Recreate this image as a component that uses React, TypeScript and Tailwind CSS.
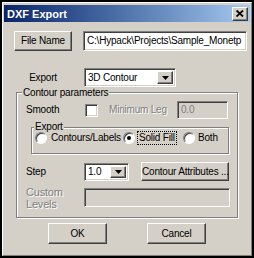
import React from 'react';

const raised =
  'border border-t-white border-l-white border-b-[#404040] border-r-[#404040] shadow-[inset_-1px_-1px_0_#808080] bg-[#d4d0c8]';
const sunken =
  'border border-t-[#808080] border-l-[#808080] border-b-white border-r-white shadow-[inset_1px_1px_0_#404040,inset_-1px_-1px_0_#d4d0c8]';
const etched = 'border border-[#808080] shadow-[inset_1px_1px_0_white,1px_1px_0_white]';

const Arrow: React.FC = () => (
  <div className={`${raised} w-[16px] h-full flex items-center justify-center`}>
    <svg width="7" height="4" viewBox="0 0 7 4">
      <path d="M0 0h7L3.5 4z" fill="#000" />
    </svg>
  </div>
);

const Radio: React.FC<{ checked?: boolean }> = ({ checked }) => (
  <span className="w-[12px] h-[12px] rounded-full bg-white border border-t-[#808080] border-l-[#808080] border-b-white border-r-white shadow-[inset_1px_1px_0_#404040] flex items-center justify-center shrink-0">
    {checked && <span className="w-[4px] h-[4px] rounded-full bg-black" />}
  </span>
);

const App: React.FC = () => {
  return (
    <div
      className="w-[254px] h-[258px] border-2 border-black bg-black text-[10px] leading-[12px] tracking-[-0.2px] text-black"
      style={{ fontFamily: '"Liberation Sans", Arial, sans-serif' }}
    >
      <div className="h-full border border-t-white border-l-white border-b-[#808080] border-r-[#808080] bg-[#d4d0c8] p-px">
        {/* title bar */}
        <div className="h-[17px] mt-px flex items-center justify-between bg-gradient-to-r from-[#0a246a] to-[#a6caf0] pl-[3px] pr-[2px]">
          <span className="text-white font-bold text-[11px] tracking-normal">DXF Export</span>
          <div className={`${raised} w-[16px] h-[14px] flex items-center justify-center`}>
            <svg width="8" height="7" viewBox="0 0 8 7">
              <path d="M0.5 0.5L7 6.5M7 0.5L0.5 6.5" stroke="#000" strokeWidth="1.8" />
            </svg>
          </div>
        </div>

        {/* file name row */}
        <div className="flex items-center mt-[9px] ml-[10px] h-[20px]">
          <button className={`${raised} w-[58px] h-full`}>File Name</button>
          <div className={`${sunken} bg-white ml-[11px] w-[164px] h-full flex items-center px-[3px] whitespace-nowrap overflow-hidden`}>
            C:\Hypack\Projects\Sample_Monetp
          </div>
        </div>

        {/* export row */}
        <div className="flex items-center mt-[17px] ml-[10px] h-[19px]">
          <span className="w-[58px] text-center">Export</span>
          <div className={`${sunken} bg-white ml-[12px] w-[92px] h-full flex items-center justify-between pl-[3px] p-[2px]`}>
            <span>3D Contour</span>
            <Arrow />
          </div>
        </div>

        {/* contour parameters */}
        <fieldset className={`${etched} ml-[12px] -mt-[1px] w-[222px] h-[132px] px-0`}>
          <legend className="ml-[5px] px-[1px] leading-[13px] bg-[#d4d0c8]">Contour parameters</legend>

          <div className="flex items-center mt-[2px] ml-[9px] h-[18px]">
            <span className="w-[59px]">Smooth</span>
            <span className={`${sunken} bg-white w-[13px] h-[13px]`} />
            <span className="ml-[11px] w-[68px] text-[#808080] [text-shadow:1px_1px_0_white]">Minimum Leg</span>
            <div className={`${sunken} w-[51px] h-full flex items-center px-[3px] text-[#808080]`}>0.0</div>
          </div>

          <fieldset className={`${etched} ml-[14px] mt-[2px] w-[198px] h-[33px]`}>
            <legend className="ml-[2px] px-[1px] leading-[12px] bg-[#d4d0c8]">Export</legend>
            <div className="flex items-center h-[13px] -mt-[2px] pl-[3px]">
              <label className="flex items-center w-[88px]">
                <Radio />
                <span className="ml-[4px]">Contours/Labels</span>
              </label>
              <label className="flex items-center w-[60px]">
                <Radio checked />
                <span className="ml-[2px] px-px border border-dotted border-black">Solid Fill</span>
              </label>
              <label className="flex items-center">
                <Radio />
                <span className="ml-[3px]">Both</span>
              </label>
            </div>
          </fieldset>

          <div className="flex items-center mt-[8px] ml-[9px] h-[19px]">
            <span className="w-[58px]">Step</span>
            <div className={`${sunken} bg-white w-[45px] h-[18px] flex items-center justify-between pl-[3px] p-[2px]`}>
              <span>1.0</span>
              <Arrow />
            </div>
            <button className={`${raised} ml-[12px] w-[88px] h-full whitespace-nowrap`}>Contour Attributes ...</button>
          </div>

          <div className="flex items-center mt-[7px] ml-[9px] h-[19px]">
            <span className="w-[58px] text-[11px] text-[#808080] [text-shadow:1px_1px_0_white] leading-[12px]">
              Custom
              <br />
              Levels
            </span>
            <div className={`${sunken} w-[146px] h-full`} />
          </div>
        </fieldset>

        {/* buttons */}
        <div className="flex mt-[5px] ml-[44px]">
          <button className={`${raised} w-[59px] h-[21px]`}>OK</button>
          <button className={`${raised} ml-[40px] w-[59px] h-[21px]`}>Cancel</button>
        </div>
      </div>
    </div>
  );
};

export default App;
